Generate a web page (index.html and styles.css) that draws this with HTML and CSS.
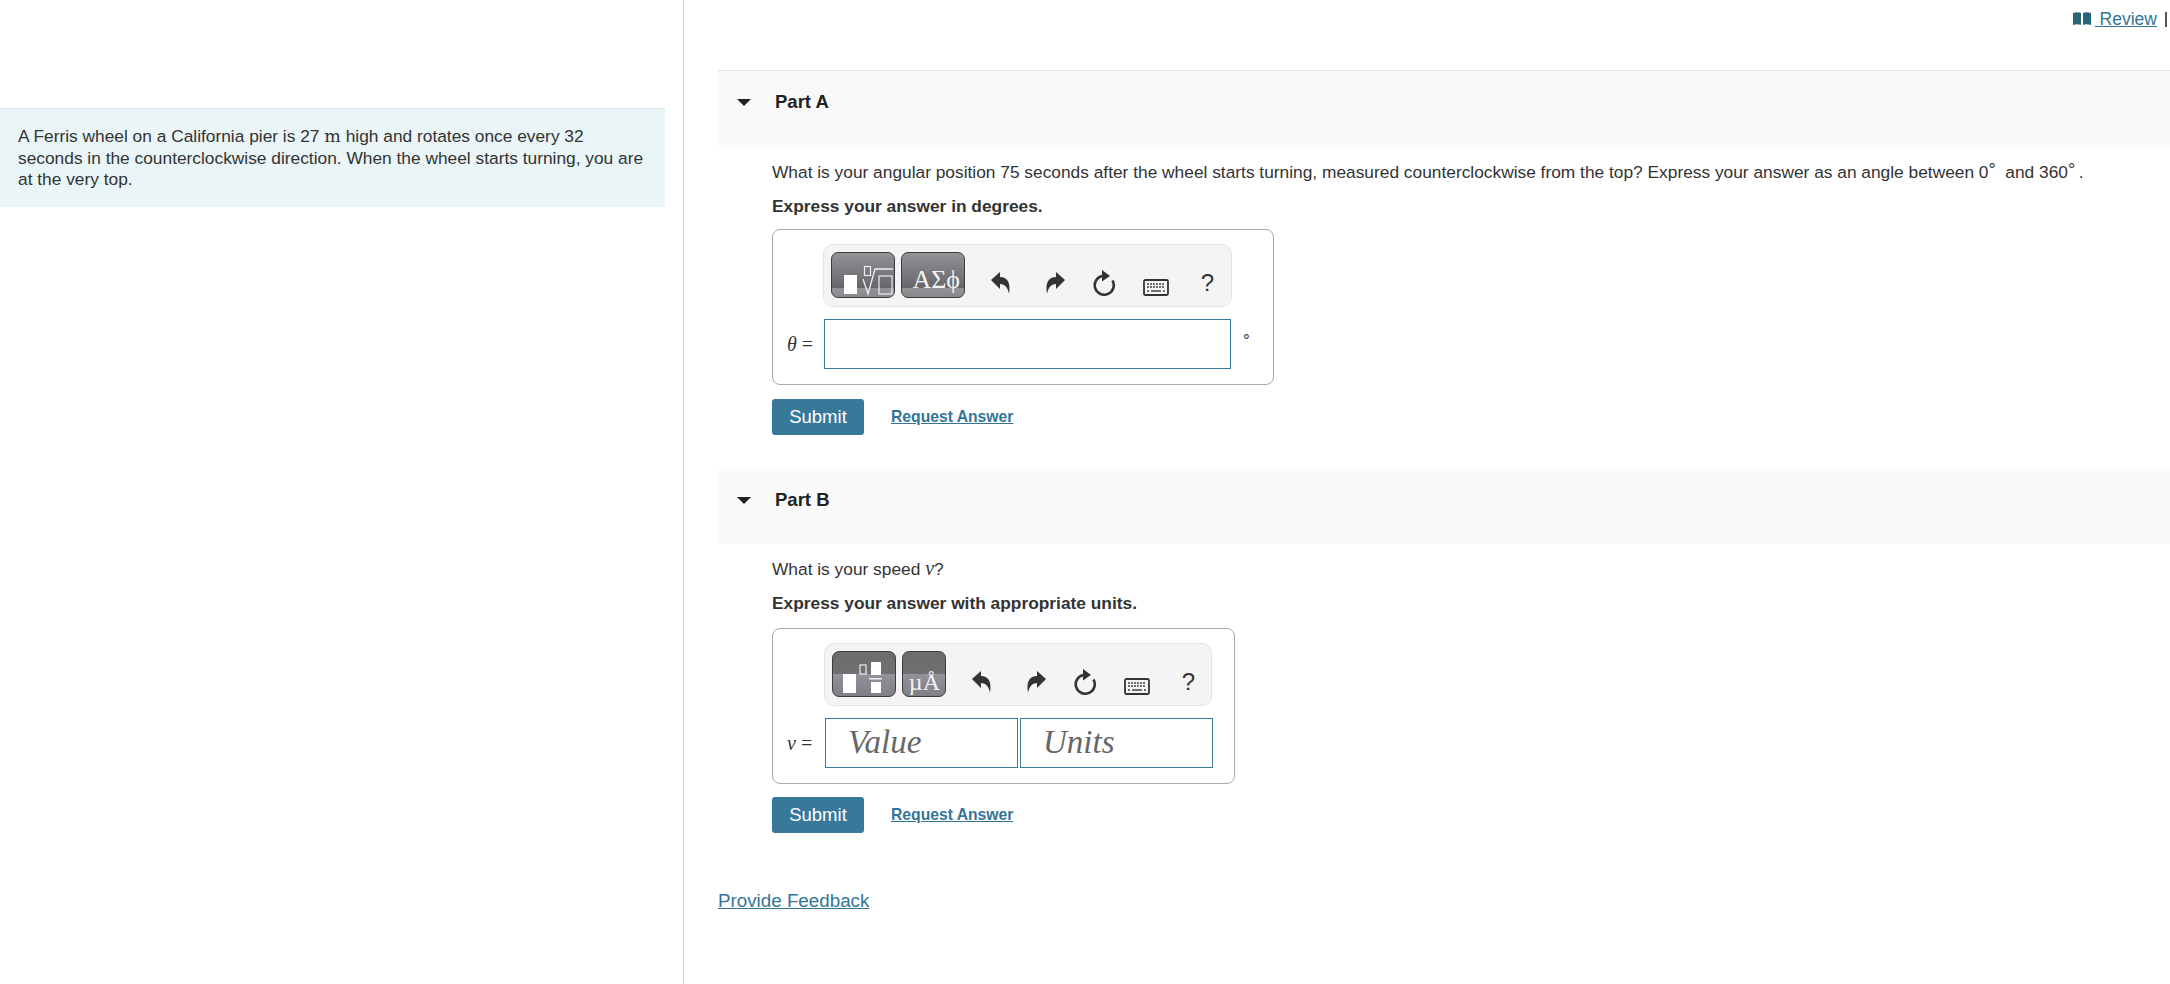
FILE: index.html
```html
<!DOCTYPE html>
<html lang="en">
<head>
  <meta charset="UTF-8" />
  <title>Ferris Wheel</title>
  <link rel="stylesheet" href="styles.css">
</head>
<body>
  <!-- Intro pane -->
  <div class="left-pane">
    <div class="intro">
      A Ferris wheel on a California pier is 27 <span class="math-unit">m</span> high and rotates once every 32 seconds in the counterclockwise direction. When the wheel starts turning, you are at the very top.
    </div>
  </div>

  <div class="right-pane">
    <div class="top-links">
      <svg class="book" width="18" height="13" viewBox="0 0 18 13"><path d="M0 1c3-1 6-1 8 0v12c-2-1-5-1-8 0zM10 1c2-1 5-1 8 0v12c-3-1-6-1-8 0z" fill="#2b6379"/></svg>
      <a href="#" class="review">&nbsp;Review</a>
      <span class="sep"></span>
    </div>

    <!-- Part A -->
    <div class="part-head part-head-first"><span class="caret"></span><h2>Part A</h2></div>
    <div class="part-body">
      <p class="question">What is your angular position 75 seconds after the wheel starts turning, measured counterclockwise from the top? Express your answer as an angle between 0<sup>&deg;</sup>&nbsp; and 360<sup>&deg;</sup>&thinsp;.</p>
      <p class="hint">Express your answer in degrees.</p>
      <div class="answer-box box-a">
        <div class="toolbar">
          <div class="tool-btn tool-a">
            <svg width="64" height="46" viewBox="0 0 64 46">
              <rect x="13" y="23" width="13" height="19" fill="#fff"/>
              <rect x="33.5" y="14.5" width="6" height="9" fill="none" stroke="#eee" stroke-width="1.2"/>
              <path d="M32 27l5 15 7-25h18" fill="none" stroke="#eee" stroke-width="1.3"/>
              <rect x="48" y="24" width="13" height="18" fill="none" stroke="#eee" stroke-width="1.2"/>
            </svg>
          </div>
          <div class="tool-btn tool-a tool-text">&Alpha;&Sigma;&#981;</div>
          <div class="tool-icons">
            <span class="slot"><svg width="20" height="22" viewBox="0 0 20 22"><path d="M0 8L9 0v5c7 0 11 5 9 17-1-6-4-10-9-10v5z" fill="#333"/></svg></span>
            <span class="slot"><svg width="20" height="22" viewBox="0 0 20 22"><path d="M20 8L11 0v5C4 5 0 10 2 22c1-6 4-10 9-10v5z" fill="#333"/></svg></span>
            <span class="slot"><svg width="24" height="26" viewBox="0 0 24 26"><path d="M20.5 10.5A9.5 9.5 0 1 1 10 6" fill="none" stroke="#333" stroke-width="2.6"/><path d="M10 0l8 6-8 5.5z" fill="#333"/></svg></span>
            <span class="slot"><svg class="keys" width="26" height="17" viewBox="0 0 26 17"><rect x="1" y="1" width="24" height="15" rx="1.5" fill="#f4f4f4" stroke="#333" stroke-width="1.8"/><path d="M4 5h18M4 8h18" stroke="#444" stroke-width="1.6" stroke-dasharray="2 1"/><path d="M4 12h2M8 12h10M20 12h2" stroke="#444" stroke-width="1.6"/></svg></span>
            <span class="slot help">?</span>
          </div>
        </div>
        <div class="eq-row">
          <span class="eq-label"><i>&theta;</i> =</span>
          <div class="eq-input eq-wide"></div>
          <span class="eq-unit">&deg;</span>
        </div>
      </div>
      <div class="actions">
        <button class="submit">Submit</button>
        <a href="#" class="request">Request Answer</a>
      </div>
    </div>

    <!-- Part B -->
    <div class="part-head"><span class="caret"></span><h2>Part B</h2></div>
    <div class="part-body">
      <p class="question question-b">What is your speed <i class="math-var">v</i>?</p>
      <p class="hint">Express your answer with appropriate units.</p>
      <div class="answer-box box-b">
        <div class="toolbar">
          <div class="tool-btn tool-b">
            <svg width="64" height="45" viewBox="0 0 64 45">
              <rect x="11" y="23" width="13" height="19" fill="#fff"/>
              <rect x="28" y="14" width="6" height="9" fill="none" stroke="#eee" stroke-width="1.2"/>
              <rect x="39" y="11" width="10" height="13" fill="#fff"/>
              <rect x="37" y="27" width="13" height="1.5" fill="#eee"/>
              <rect x="39" y="31" width="10" height="11" fill="#fff"/>
            </svg>
          </div>
          <div class="tool-btn tool-b tool-units">&micro;&Aring;</div>
          <div class="tool-icons">
            <span class="slot"><svg width="20" height="22" viewBox="0 0 20 22"><path d="M0 8L9 0v5c7 0 11 5 9 17-1-6-4-10-9-10v5z" fill="#333"/></svg></span>
            <span class="slot"><svg width="20" height="22" viewBox="0 0 20 22"><path d="M20 8L11 0v5C4 5 0 10 2 22c1-6 4-10 9-10v5z" fill="#333"/></svg></span>
            <span class="slot"><svg width="24" height="26" viewBox="0 0 24 26"><path d="M20.5 10.5A9.5 9.5 0 1 1 10 6" fill="none" stroke="#333" stroke-width="2.6"/><path d="M10 0l8 6-8 5.5z" fill="#333"/></svg></span>
            <span class="slot"><svg class="keys" width="26" height="17" viewBox="0 0 26 17"><rect x="1" y="1" width="24" height="15" rx="1.5" fill="#f4f4f4" stroke="#333" stroke-width="1.8"/><path d="M4 5h18M4 8h18" stroke="#444" stroke-width="1.6" stroke-dasharray="2 1"/><path d="M4 12h2M8 12h10M20 12h2" stroke="#444" stroke-width="1.6"/></svg></span>
            <span class="slot help">?</span>
          </div>
        </div>
        <div class="eq-row">
          <span class="eq-label"><i>v</i> =</span>
          <div class="eq-input eq-half">Value</div>
          <div class="eq-input eq-half">Units</div>
        </div>
      </div>
      <div class="actions actions-b">
        <button class="submit">Submit</button>
        <a href="#" class="request">Request Answer</a>
      </div>
    </div>

    <a href="#" class="feedback">Provide Feedback</a>
  </div>
</body>
</html>
```

FILE: styles.css
```css
:root {
  --text-color: #333;
  --link-color: #337599;
  --teal: #38789b;
  --radius: 8px;
}

html, body {
  height: 100%;
}

body {
  margin: 0;
  display: flex;
  height: 984px;
  overflow: hidden;
  font-family: "Liberation Sans", Arial, sans-serif;
  font-size: 17.33px;
  color: var(--text-color);
  background: #fff;
}

.left-pane {
  width: 684px;
  flex: none;
  padding-top: 108px;
  box-sizing: border-box;
  border-right: 1px solid #c5c9d3;
}

.intro {
  width: 665px;
  box-sizing: border-box;
  padding: 17px 18px 16px 18px;
  background: #e9f5f7;
  border-top: 1px solid #dce3e5;
  line-height: 21.5px;
}

.math-unit {
  font-family: "DejaVu Serif", serif;
  font-size: 17.5px;
  line-height: 1;
}

.right-pane {
  flex: 1;
  min-width: 0;
  padding-left: 34px;
}

.top-links {
  height: 70px;
  box-sizing: border-box;
  padding: 8px 3px 0 0;
  display: flex;
  justify-content: flex-end;
  align-items: flex-start;
  line-height: 22px;
  font-size: 17.5px;
}

.book {
  margin: 4px 4px 0 0;
}

.review {
  color: var(--link-color);
}

.sep {
  width: 2px;
  height: 15px;
  margin: 4px 0 0 8px;
  background: #555;
}

.part-head {
  height: 75px;
  box-sizing: border-box;
  background: #f9f9f9;
  display: flex;
  align-items: flex-start;
  padding: 20px 0 0 19px;
}

.part-head-first {
  height: 77px;
  border-top: 1px solid #e2e2e2;
}

.caret {
  width: 0;
  height: 0;
  margin-top: 8px;
  border-left: 7.5px solid transparent;
  border-right: 7.5px solid transparent;
  border-top: 7px solid #222;
}

.part-head h2 {
  margin: 0 0 0 24px;
  font-size: 18.5px;
  line-height: 22px;
  color: #222;
}

.part-body {
  padding-left: 54px;
}

.question,
.hint {
  margin: 0;
  line-height: 22px;
  white-space: nowrap;
}

.question {
  padding-top: 14px;
}

.question-b {
  padding-top: 13px;
}

.question sup {
  font-size: 18px;
  line-height: 0;
  vertical-align: 2px;
}

.math-var {
  font-family: "Liberation Serif", serif;
  font-size: 20px;
}

.hint {
  margin-top: 12px;
  font-weight: bold;
}

.answer-box {
  margin-top: 12px;
  box-sizing: border-box;
  height: 156px;
  padding-top: 14px;
  border: 1px solid #aaa;
  border-radius: var(--radius);
}

.box-b {
  margin-top: 14px;
  width: 463px;
}

.box-a {
  width: 502px;
}

.toolbar {
  margin-left: 50px;
  height: 63px;
  box-sizing: border-box;
  padding: 7px 7px;
  display: flex;
  gap: 6px;
  background: #f4f4f4;
  border: 1px solid #e4e4e4;
  border-radius: 10px;
}

.box-a .toolbar {
  width: 409px;
}

.box-b .toolbar {
  width: 388px;
  margin-left: 51px;
}

.tool-btn {
  height: 46px;
  box-sizing: border-box;
  width: 64px;
  flex: none;
  border: 1px solid #3d3d40;
  border-radius: 7px;
  overflow: hidden;
  color: #f2f2f2;
  font-family: "Liberation Serif", serif;
}

.tool-btn svg {
  display: block;
  margin: -1px;
}

.tool-a {
  background: linear-gradient(#929297 0, #66666a 80%, #929297 80%, #88888d 100%);
}

.tool-b {
  background: linear-gradient(#6c6c6e 0, #717173 50%, #929298 50%, #7f7f85 100%);
}

.tool-text {
  font-size: 26px;
  line-height: 54px;
  text-align: right;
  padding-right: 4px;
  white-space: nowrap;
}

.tool-units {
  width: 44px;
  font-size: 24px;
  line-height: 26px;
  padding: 17px 5px 0 0;
  text-align: right;
  white-space: nowrap;
}

.tool-icons {
  display: flex;
  margin-left: 3px;
  padding-top: 16px;
}

.slot {
  width: 52px;
  height: 30px;
  display: flex;
  justify-content: center;
  align-items: center;
}

.slot:nth-child(1) {
  width: 54px;
}

.slot:nth-child(2) {
  width: 53px;
}

.slot:nth-child(3) {
  width: 46px;
}

.slot:nth-child(4) {
  width: 57px;
}

.slot:nth-child(5) {
  width: 47px;
}

.keys {
  margin-top: 8px;
}

.help {
  font-size: 24px;
  color: #333;
}

.eq-row {
  display: flex;
  align-items: center;
  margin-top: 12px;
  height: 50px;
}

.eq-label {
  width: 51px;
  flex: none;
  box-sizing: border-box;
  padding-left: 14px;
  font-family: "Liberation Serif", serif;
  font-size: 20px;
  white-space: nowrap;
}

.box-b .eq-label {
  width: 52px;
}

.eq-input {
  height: 50px;
  box-sizing: border-box;
  border: 1px solid var(--teal);
  background: #fff;
}

.eq-wide {
  width: 407px;
}

.eq-half {
  width: 193px;
  padding-left: 22px;
  margin-right: 2px;
  font-family: "Liberation Serif", serif;
  font-style: italic;
  font-size: 33px;
  line-height: 46px;
  color: #666;
}

.eq-unit {
  margin: -6px 0 0 12px;
  font-size: 17px;
}

.actions {
  margin-top: 14px;
  display: flex;
  align-items: center;
}

.actions-b {
  margin-top: 13px;
}

.submit {
  width: 92px;
  height: 36px;
  padding: 0;
  border: none;
  border-radius: 3px;
  background: var(--teal);
  color: #fff;
  font-family: "Liberation Sans", Arial, sans-serif;
  font-size: 18.5px;
}

.request {
  margin-left: 27px;
  color: var(--link-color);
  font-size: 15.7px;
  font-weight: bold;
}

.part-body + .part-head {
  margin-top: 34px;
}

.feedback {
  display: block;
  margin-top: 55px;
  color: var(--link-color);
  font-size: 18.8px;
  line-height: 26px;
  width: max-content;
}
```
